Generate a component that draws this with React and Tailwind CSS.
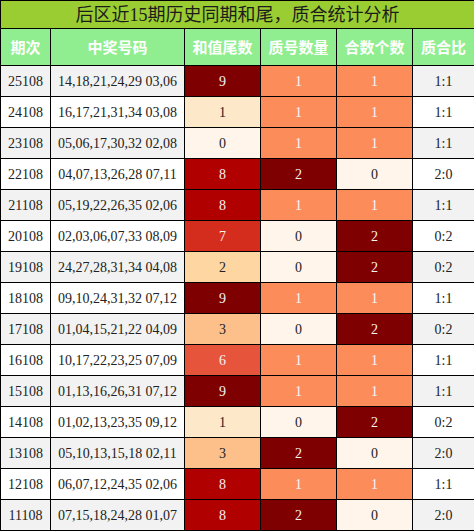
import React from "react";

const rows = [
  ["25108", "14,18,21,24,29 03,06", 9, 1, 1, "1:1"],
  ["24108", "16,17,21,31,34 03,08", 1, 1, 1, "1:1"],
  ["23108", "05,06,17,30,32 02,08", 0, 1, 1, "1:1"],
  ["22108", "04,07,13,26,28 07,11", 8, 2, 0, "2:0"],
  ["21108", "05,19,22,26,35 02,06", 8, 1, 1, "1:1"],
  ["20108", "02,03,06,07,33 08,09", 7, 0, 2, "0:2"],
  ["19108", "24,27,28,31,34 04,08", 2, 0, 2, "0:2"],
  ["18108", "09,10,24,31,32 07,12", 9, 1, 1, "1:1"],
  ["17108", "01,04,15,21,22 04,09", 3, 0, 2, "0:2"],
  ["16108", "10,17,22,23,25 07,09", 6, 1, 1, "1:1"],
  ["15108", "01,13,16,26,31 07,12", 9, 1, 1, "1:1"],
  ["14108", "01,02,13,23,35 09,12", 1, 0, 2, "0:2"],
  ["13108", "05,10,13,15,18 02,11", 3, 2, 0, "2:0"],
  ["12108", "06,07,12,24,35 02,06", 8, 1, 1, "1:1"],
  ["11108", "07,15,18,24,28 01,07", 8, 2, 0, "2:0"],
];

// heat colours for the sum-tail column
const tailCls = {
  0: "bg-[#fff5eb] text-[#222]",
  1: "bg-[#fee8ca] text-[#222]",
  2: "bg-[#fdd6a2] text-[#222]",
  3: "bg-[#fdc08a] text-[#222]",
  6: "bg-[#e6553b] text-[#f4f4f4]",
  7: "bg-[#d42d1e] text-[#f4f4f4]",
  8: "bg-[#b00000] text-[#f4f4f4]",
  9: "bg-[#7f0000] text-[#f4f4f4]",
};

const countCls = {
  0: "bg-[#fff5eb] text-[#222]",
  1: "bg-[#fc8d5a] text-[#f6f6f6]",
  2: "bg-[#7f0000] text-[#f4f4f4]",
};

const headers = ["期次", "中奖号码", "和值尾数", "质号数量", "合数个数", "质合比"];

export default function App() {
  return (
    <div className="w-[474px] h-[531px] bg-white" style={{ fontFamily: '"Liberation Serif", "Noto Sans CJK SC", serif' }}>
      <table className="w-[474px] table-fixed border-collapse text-[14px] text-[#222]">
        <colgroup>
          <col className="w-[50px]" />
          <col className="w-[134px]" />
          <col className="w-[76px]" />
          <col className="w-[76px]" />
          <col className="w-[76px]" />
          <col className="w-[62px]" />
        </colgroup>
        <thead>
          <tr className="h-[28px]">
            <th colSpan={6} className="bg-[#9acd32] border border-black font-normal text-[18px] text-[#1c1c1c] leading-none">
              后区近15期历史同期和尾，质合统计分析
            </th>
          </tr>
          <tr className="h-[37px]">
            {headers.map((h) => (
              <th key={h} className="bg-[#90ee90] border border-black text-white font-bold text-[15px]" style={{ fontFamily: '"Noto Sans CJK SC", sans-serif' }}>
                {h}
              </th>
            ))}
          </tr>
        </thead>
        <tbody>
          {rows.map((r, i) => {
            const base = i % 2 === 0 ? "bg-[#f2f2f2]" : "bg-white";
            return (
              <tr key={r[0]} className="h-[31px] text-center">
                <td className={`border border-black ${base}`}>{r[0]}</td>
                <td className={`border border-black ${base}`}>{r[1]}</td>
                <td className={`border border-black ${tailCls[r[2]]}`}>{r[2]}</td>
                <td className={`border border-black ${countCls[r[3]]}`}>{r[3]}</td>
                <td className={`border border-black ${countCls[r[4]]}`}>{r[4]}</td>
                <td className={`border border-black ${base}`}>{r[5]}</td>
              </tr>
            );
          })}
        </tbody>
      </table>
    </div>
  );
}
